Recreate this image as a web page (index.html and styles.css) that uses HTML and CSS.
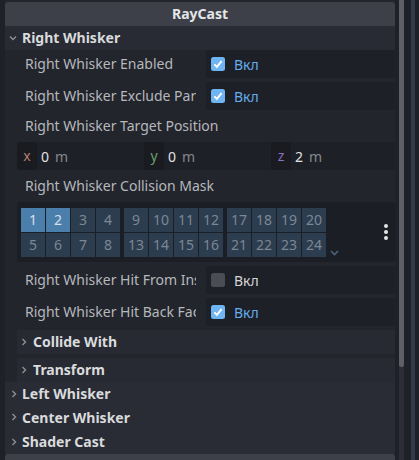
FILE: index.html
```html
<!DOCTYPE html>
<html>
<head>
<meta charset="utf-8">
<link rel="stylesheet" href="styles.css">
</head>
<body>
<div class="screen">
  <div class="panel">
    <div class="obj-header">RayCast</div>
    <div class="section-header">
      <svg class="arrow-down" width="8" height="6" viewBox="0 0 8 6"><path d="M1 1.5 L4 4.5 L7 1.5" fill="none" stroke="#8d9096" stroke-width="1.4"/></svg>
      <span>Right Whisker</span>
    </div>
    <div class="section-body">
      <div class="prop">
        <div class="label">Right Whisker Enabled</div>
        <div class="value">
          <svg class="check" width="14" height="14" viewBox="0 0 14 14"><rect width="14" height="14" rx="2.5" fill="#70b5f3"/><path d="M3.3 7.4 L5.9 9.9 L10.6 4.2" fill="none" stroke="#fff" stroke-width="2"/></svg>
          <span class="on-text">Вкл</span>
        </div>
      </div>
      <div class="prop">
        <div class="label">Right Whisker Exclude Parent</div>
        <div class="value">
          <svg class="check" width="14" height="14" viewBox="0 0 14 14"><rect width="14" height="14" rx="2.5" fill="#70b5f3"/><path d="M3.3 7.4 L5.9 9.9 L10.6 4.2" fill="none" stroke="#fff" stroke-width="2"/></svg>
          <span class="on-text">Вкл</span>
        </div>
      </div>
      <div class="wide-label">Right Whisker Target Position</div>
      <div class="vector">
        <div class="field"><span class="axis ax-x">x</span><span class="num">0</span><span class="unit">m</span></div>
        <div class="field"><span class="axis ax-y">y</span><span class="num">0</span><span class="unit">m</span></div>
        <div class="field"><span class="axis ax-z">z</span><span class="num">2</span><span class="unit">m</span></div>
      </div>
      <div class="wide-label">Right Whisker Collision Mask</div>
      <div class="layers">
        <div class="group">
          <span class="cell sel">1</span><span class="cell sel">2</span><span class="cell">3</span><span class="cell">4</span>
          <span class="cell">5</span><span class="cell">6</span><span class="cell">7</span><span class="cell">8</span>
        </div>
        <div class="group">
          <span class="cell">9</span><span class="cell">10</span><span class="cell">11</span><span class="cell">12</span>
          <span class="cell">13</span><span class="cell">14</span><span class="cell">15</span><span class="cell">16</span>
        </div>
        <div class="group">
          <span class="cell">17</span><span class="cell">18</span><span class="cell">19</span><span class="cell">20</span>
          <span class="cell">21</span><span class="cell">22</span><span class="cell">23</span><span class="cell">24</span>
        </div>
        <svg class="more-arrow" width="9" height="6" viewBox="0 0 9 6"><path d="M1 1 L4.5 4.5 L8 1" fill="none" stroke="#4a6480" stroke-width="1.6"/></svg>
        <div class="kebab"><i></i><i></i><i></i></div>
      </div>
      <div class="prop">
        <div class="label">Right Whisker Hit From Inside</div>
        <div class="value">
          <span class="check-off"></span>
          <span class="off-text">Вкл</span>
        </div>
      </div>
      <div class="prop last">
        <div class="label">Right Whisker Hit Back Faces</div>
        <div class="value">
          <svg class="check" width="14" height="14" viewBox="0 0 14 14"><rect width="14" height="14" rx="2.5" fill="#70b5f3"/><path d="M3.3 7.4 L5.9 9.9 L10.6 4.2" fill="none" stroke="#fff" stroke-width="2"/></svg>
          <span class="on-text">Вкл</span>
        </div>
      </div>
      <div class="sub-header">
        <svg class="arrow-right" width="6" height="8" viewBox="0 0 6 8"><path d="M1.5 1 L4.5 4 L1.5 7" fill="none" stroke="#8d9096" stroke-width="1.4"/></svg>
        <span>Collide With</span>
      </div>
      <div class="sub-header">
        <svg class="arrow-right" width="6" height="8" viewBox="0 0 6 8"><path d="M1.5 1 L4.5 4 L1.5 7" fill="none" stroke="#8d9096" stroke-width="1.4"/></svg>
        <span>Transform</span>
      </div>
    </div>
    <div class="closed-sections">
      <div class="closed h1">
        <svg class="arrow-right" width="6" height="8" viewBox="0 0 6 8"><path d="M1.5 1 L4.5 4 L1.5 7" fill="none" stroke="#8d9096" stroke-width="1.4"/></svg>
        <span>Left Whisker</span>
      </div>
      <div class="closed h2">
        <svg class="arrow-right" width="6" height="8" viewBox="0 0 6 8"><path d="M1.5 1 L4.5 4 L1.5 7" fill="none" stroke="#8d9096" stroke-width="1.4"/></svg>
        <span>Center Whisker</span>
      </div>
      <div class="closed h3">
        <svg class="arrow-right" width="6" height="8" viewBox="0 0 6 8"><path d="M1.5 1 L4.5 4 L1.5 7" fill="none" stroke="#8d9096" stroke-width="1.4"/></svg>
        <span>Shader Cast</span>
      </div>
    </div>
    <div class="obj-header next"></div>
  </div>
  <div class="scrollbar"><div class="grabber"></div></div>
  <div class="stripe"></div>
</div>
</body>
</html>
```

FILE: styles.css
```css
* { box-sizing: border-box; }
html, body {
  margin: 0;
  padding: 0;
  background: #1e2127;
  font-family: "Noto Sans", "Open Sans", sans-serif;
  font-size: 14px;
  color: #e0e0e0;
}
.screen {
  display: flex;
  height: 460px;
  overflow: hidden;
  padding-left: 5px;
}
.panel {
  width: 390px;
  flex: none;
  background: #22252c;
  padding-top: 2px;
  display: flex;
  flex-direction: column;
}
.obj-header {
  height: 24px;
  flex: none;
  background: #3d4048;
  border-radius: 3px 3px 0 0;
  text-align: center;
  font-weight: 700;
  line-height: 24px;
  color: #e4e5e7;
}
.obj-header.next { height: 10px; border-radius: 3px 3px 0 0; }
.section-header {
  height: 24px;
  flex: none;
  background: #282b33;
  display: flex;
  align-items: center;
  font-weight: 700;
  color: #d9dadc;
  padding-bottom: 1px;
}
.arrow-down { margin-left: 4px; margin-right: 5px; }
.section-body {
  display: flex;
  flex-direction: column;
  padding-left: 12px;
}
.prop {
  display: grid;
  grid-template-columns: 179px 189px;
  column-gap: 10px;
  height: 28px;
  margin-bottom: 4px;
}
.prop.last { margin-bottom: 4px; }
.label {
  padding-left: 8px;
  line-height: 28px;
  white-space: nowrap;
  overflow: hidden;
  color: #b6b8bc;
}
.value {
  background: #1d2027;
  border-radius: 3px;
  display: flex;
  align-items: center;
  padding-left: 5px;
}
.check { flex: none; }
.check-off {
  width: 14px;
  height: 14px;
  border-radius: 2.5px;
  background: #4a4d54;
  flex: none;
}
.on-text, .off-text { margin-left: 9px; }
.on-text { color: #66adeb; }
.off-text { color: #d4d5d7; }
.wide-label {
  height: 24px;
  line-height: 24px;
  padding-left: 8px;
  margin-bottom: 4px;
  color: #b6b8bc;
  white-space: nowrap;
}
.vector {
  display: grid;
  grid-template-columns: 127px 127px 124px;
  height: 28px;
  background: #1d2027;
  border-radius: 3px;
  margin-bottom: 4px;
}
.field {
  display: flex;
  align-items: center;
}
.axis {
  width: 20px;
  height: 28px;
  line-height: 27px;
  text-align: center;
  background: #191b21;
  border-radius: 3px;
}
.ax-x { color: #b47f6a; }
.ax-y { color: #6b9e68; }
.ax-z { color: #8a6fc4; }
.num { margin-left: 4px; color: #e2e2e2; }
.unit { margin-left: 6px; color: #85878b; }
.layers {
  position: relative;
  display: flex;
  height: 60px;
  padding: 6px 4px 5px 4px;
  background: #1b1e24;
  border-radius: 3px;
  margin-bottom: 4px;
  gap: 4px;
}
.group {
  display: grid;
  grid-template-columns: repeat(4, 24px);
  grid-template-rows: 24px 24px;
  gap: 1px;
}
.cell {
  background: #2c3d4f;
  color: #7c8793;
  text-align: center;
  line-height: 24px;
  font-size: 14px;
}
.cell.sel {
  background: #4b7fab;
  color: #d6dfe8;
}
.more-arrow {
  align-self: flex-end;
  margin-bottom: 1px;
}
.kebab {
  position: absolute;
  left: 367px;
  top: 22px;
  display: flex;
  flex-direction: column;
  gap: 2px;
}
.kebab i {
  width: 4px;
  height: 4px;
  border-radius: 50%;
  background: #e4e4e4;
}
.sub-header {
  height: 24px;
  background: #272a32;
  display: flex;
  align-items: center;
  font-weight: 700;
  color: #dadbdd;
  margin-bottom: 4px;
  padding-bottom: 1px;
}
.sub-header:last-child { margin-bottom: 0; }
.sub-header .arrow-right { margin-left: 4px; margin-right: 6px; }
.closed-sections {
  background: #292c35;
  display: flex;
  flex-direction: column;
}
.closed {
  display: flex;
  align-items: center;
  font-weight: 700;
  color: #d9dadc;
}
.closed.h1 { height: 23px; }
.closed.h2 { height: 24px; }
.closed.h3 { height: 25px; }
.closed .arrow-right { margin-left: 6px; margin-right: 5px; }
.scrollbar {
  width: 5px;
  margin-left: 4px;
  background: #2b2e36;
  flex: none;
}
.grabber {
  height: 367px;
  background: #5d6066;
  border-radius: 0 0 3px 3px;
}
.stripe {
  width: 4px;
  margin-left: 7px;
  background: #353c48;
  flex: none;
}
```
